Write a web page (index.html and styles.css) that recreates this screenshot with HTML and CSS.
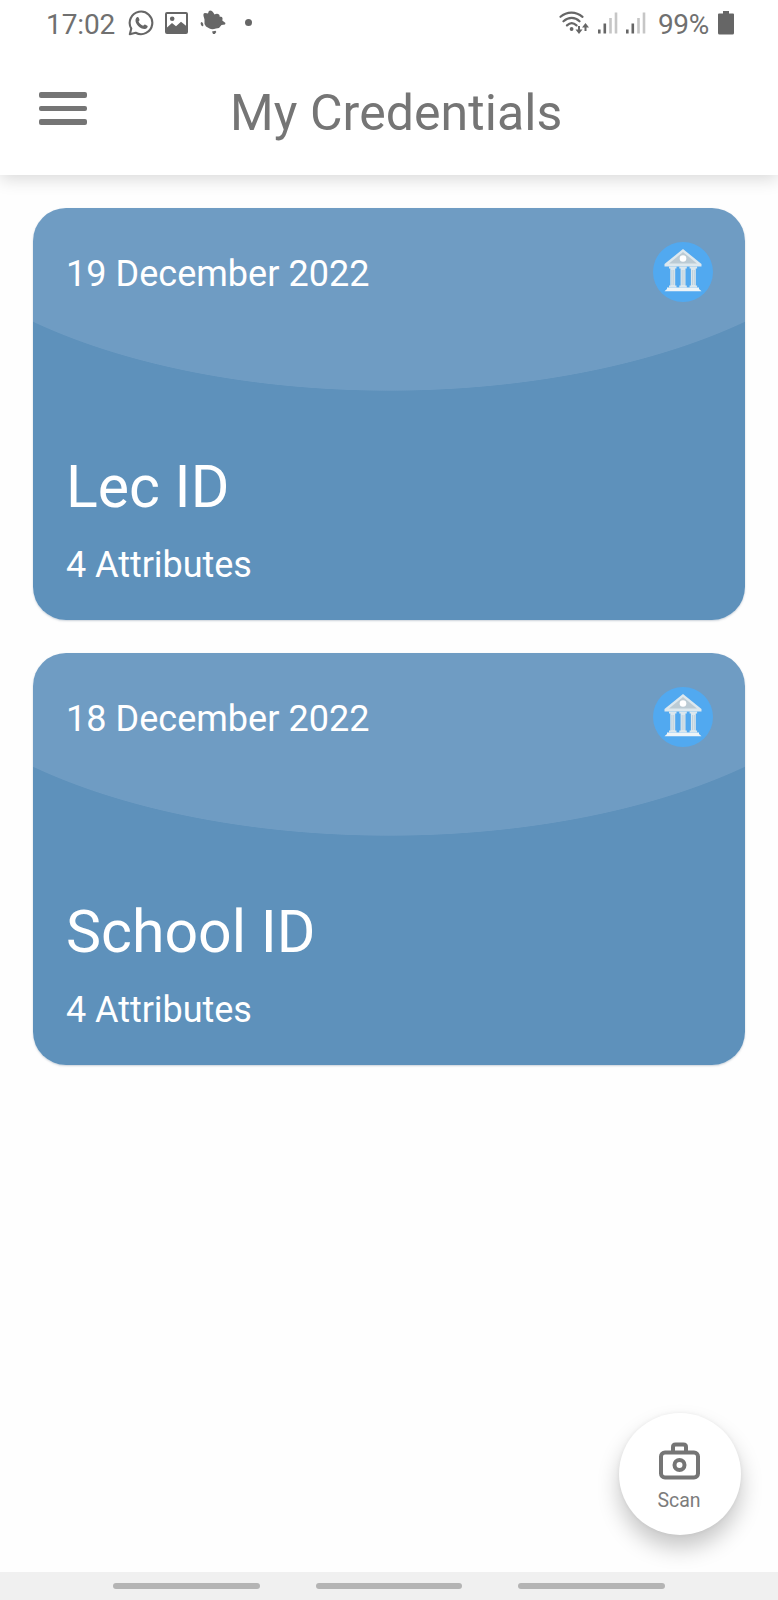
FILE: index.html
```html
<!DOCTYPE html>
<html lang="en">
<head>
<meta charset="utf-8">
<title>My Credentials</title>
<link rel="stylesheet" href="styles.css">
</head>
<body>
<svg class="defs" aria-hidden="true">
  <symbol id="bank" viewBox="0 0 60 60">
    <circle cx="30" cy="30" r="30" fill="#51a9f0"/>
    <path d="M30 7 11.500 22v2.500h37V22z" fill="#dde8ee"/>
    <path d="M30 10 16 21.500h28z" fill="#bccbd4"/>
    <circle cx="30" cy="16.500" r="3.300" fill="#fff"/>
    <path d="M16 24.500h7.500v2h-1.300v17h1.300v2H16v-2h1.300v-17H16zM26.300 24.500h7.500v2h-1.300v17h1.300v2h-7.500v-2h1.300v-17h-1.300zM36.600 24.500h7.500v2h-1.300v17h1.300v2h-7.500v-2h1.300v-17h-1.300z" fill="#dce7ed"/>
    <path d="M18.900 28v15M20.700 28v15M29.200 28v15M31 28v15M39.500 28v15M41.300 28v15" stroke="#b3c8d5" stroke-width=".7"/>
    <path d="M14 45.500h32V47l2.500 2.300h-37L14 47z" fill="#eef4f7"/>
  </symbol>
  <symbol id="signal" viewBox="0 0 20 22">
    <path d="M1.300 17.500v4M6.800 11.500v10" stroke="#666" stroke-width="2.600"/>
    <path d="M12.500 6v15.500M18 .5v21" stroke="#c6c6c6" stroke-width="2.600"/>
  </symbol>
</svg>
<div class="screen">
  <div class="status">
    <span class="time">17:02</span>
    <svg class="whatsapp" viewBox="0 0 26 26">
      <path d="M1.800 24.300 3.300 18.600A11.300 11.300 0 1 1 7.700 22.800z" fill="none" stroke="#666" stroke-width="2.100" stroke-linejoin="round"/>
      <path d="M8.900 7.200c.7-.5 1.500-.2 1.800.5l.8 2c.2.600-.8 1.300-1 1.800.9 2 2.500 3.500 4.600 4.300.6-.2 1.200-1.500 1.900-1.300l2.300 1.200c1 .6-.2 3-2.200 3.300-4.800.3-10-5-9.600-9 .1-1 .6-2.200 1.400-2.800z" fill="#666"/>
    </svg>
    <svg class="photo" viewBox="0 0 23 22">
      <path fill-rule="evenodd" d="M2 0h19q2 0 2 2v18q0 2-2 2H2q-2 0-2-2V2q0-2 2-2zM2 2v13.500l5-4.500 4 3.300 5-4.500 5 4V2z" fill="#666"/>
      <circle cx="7.200" cy="6.800" r="2.300" fill="#666"/>
    </svg>
    <svg class="leaf" viewBox="0 0 26 25">
      <path d="M10 .5C12 .5 13 2 14.500 4.500c1.500-1 3.500-1 4.500 0s.5 1.500.5 2L22 7q1 1 .3 3.500L25.500 13l-.5 1.500-3.500.5-2.500 3-3 .5q-4 1.500-6.500 0L6 16.500 4.500 14V9.500L3.500 6Q3 3 5 3T8 3.500Q8.500.5 10 .5z" fill="#666"/>
      <ellipse cx="2" cy="14.200" rx="1.200" ry="2.200" transform="rotate(-20 2 14.200)" fill="#666"/>
      <path d="M12 21.500l3.500-.7.800 1.200-1.500 2H13z" fill="#666"/>
    </svg>
    <i class="dot"></i>
    <svg class="wifi" viewBox="0 0 31 24">
      <g fill="none" stroke="#666" stroke-width="2.200" stroke-linecap="round">
        <path d="M1.500 5.800C8 0 17 .3 23.500 5.800M4.500 10.300c5-4.500 11.500-4.500 16 0M8 14.400c3-2.800 6.500-2.800 9.500 0"/>
      </g>
      <circle cx="12.600" cy="18" r="1.900" fill="#666"/>
      <path d="M20 15v6M26.500 20v-6" fill="none" stroke="#666" stroke-width="2"/>
      <path d="M16.500 18.500h7L20 23zM23 16.500h7l-3.500-4.500z" fill="#666"/>
    </svg>
    <svg class="signal"><use href="#signal"/></svg>
    <svg class="signal"><use href="#signal"/></svg>
    <span class="percent">99%</span>
    <svg class="battery" viewBox="0 0 16 24"><path d="M5 0h6v2.500h4q1 0 1 1V22q0 1.500-1.500 1.500h-13Q0 23.500 0 22V3.500q0-1 1-1h4z" fill="#666"/></svg>
  </div>
  <header class="header">
    <div class="menu"><i></i><i></i><i></i></div>
    <h1 class="title">My Credentials</h1>
  </header>
  <main class="list">
    <section class="card">
      <div class="card-top"><span class="date">19 December 2022</span><svg class="bank"><use href="#bank"/></svg></div>
      <h2 class="name">Lec ID</h2>
      <p class="attributes">4 Attributes</p>
    </section>
    <section class="card">
      <div class="card-top"><span class="date">18 December 2022</span><svg class="bank"><use href="#bank"/></svg></div>
      <h2 class="name">School ID</h2>
      <p class="attributes">4 Attributes</p>
    </section>
  </main>
  <div class="nav"><i></i><i></i><i></i></div>
  <div class="scan">
    <svg class="camera" viewBox="0 0 42 38">
      <g fill="none" stroke="#757575" stroke-width="4">
        <rect x="2" y="10.500" width="37" height="25" rx="4"/>
        <path d="M14 10V5q0-2.500 2.500-2.500h8Q27 2.500 27 5v5"/>
        <circle cx="20.500" cy="23" r="5"/>
      </g>
    </svg>
    <span class="scan-label">Scan</span>
  </div>
</div>
</body>
</html>
```
FILE: styles.css
```css
* { box-sizing: border-box; }
body { margin: 0; background: #fefefe; font-family: Roboto, sans-serif; }
.defs { position: absolute; width: 0; height: 0; }
.screen { position: relative; width: 778px; height: 1600px; display: flex; flex-direction: column; overflow: hidden; }
.status { height: 48px; flex: none; display: flex; align-items: center; padding-left: 46px; color: #707070; font-size: 28px; line-height: 50px; background: #fff; position: relative; z-index: 2; }
.time { width: 82px; padding-top: 2px; letter-spacing: -0.1px; }
.whatsapp { width: 26px; height: 26px; margin-top: -2px; }
.photo { width: 23px; height: 22px; margin: -3px 0 0 11px; }
.leaf { width: 26px; height: 25px; margin: -3px 0 0 12px; }
.dot { width: 7px; height: 7px; border-radius: 50%; background: #666; margin: -3px 0 0 19px; }
.wifi { width: 31px; height: 24px; margin: -3px 0 0 307px; }
.signal { width: 20px; height: 22px; margin: -2px 0 0 8px; }
.percent { width: 60px; margin-left: 12px; padding-top: 2px; white-space: nowrap; letter-spacing: -0.4px; }
.battery { width: 16px; height: 24px; margin-top: -2px; }
.header { height: 127px; flex: none; display: flex; align-items: flex-start; padding: 44px 0 0 39px; background: #fff; box-shadow: 0 4px 16px rgba(0,0,0,.15); position: relative; z-index: 1; }
.menu { width: 48px; display: flex; flex-direction: column; gap: 8px; }
.menu i { height: 5.5px; border-radius: 2px; background: #757575; }
.title { margin: -9px 0 0 143px; font-size: 50px; line-height: 60px; font-weight: 400; color: #757575; white-space: nowrap; letter-spacing: 0.08px; }
.list { flex: 1; display: flex; flex-direction: column; gap: 33px; padding: 33px; }
.card { height: 412px; flex: none; border-radius: 33px; padding: 33px 32px 0 33px; color: #fff; background: radial-gradient(500px 231px at 356px -48px, #6f9cc3 99.7%, #5e91bb 100%); box-shadow: 0 1px 2px rgba(50,80,110,.25); }
.card-top { display: flex; justify-content: space-between; height: 62px; }
.date { font-size: 36px; line-height: 66px; letter-spacing: 0.03px; }
.bank { width: 60px; height: 60px; margin-top: 1px; }
.name { margin: 149px 0 0; font-size: 59px; line-height: 70px; font-weight: 400; }
.attributes { margin: 21px 0 0; font-size: 36px; line-height: 44px; letter-spacing: -0.04px; }
.nav { height: 28px; flex: none; display: flex; align-items: center; justify-content: center; gap: 56px; background: #f0f0f0; }
.nav i { width: 146.5px; height: 6px; border-radius: 3px; background: #b4b4b4; }
.scan { position: absolute; left: 619px; top: 1413px; width: 122px; height: 122px; border-radius: 50%; background: #fff; display: flex; flex-direction: column; align-items: center; padding-top: 29px; box-shadow: 0 13px 22px rgba(0,0,0,.22), 0 0 4px rgba(0,0,0,.06); }
.camera { width: 42px; height: 38px; }
.scan-label { margin: 9px 2px 0 0; font-size: 19.5px; line-height: 24px; color: #7c7c7c; }
```
